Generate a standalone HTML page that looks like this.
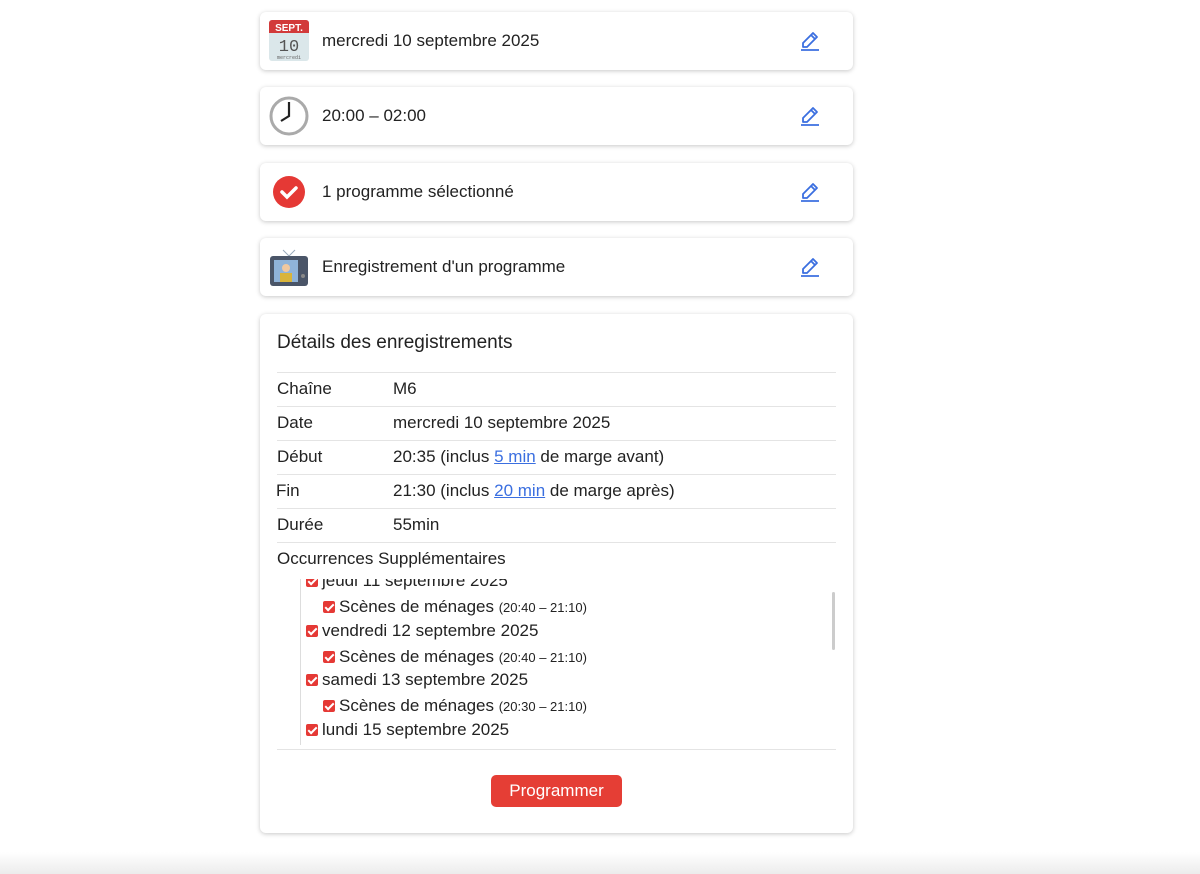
<!DOCTYPE html>
<html><head><meta charset="utf-8"><style>
body{margin:0;width:1200px;height:874px;background:#fff;font-family:"Liberation Sans",sans-serif;color:#222;position:relative;overflow:hidden}
.card{position:absolute;left:260px;width:593px;background:#fff;border-radius:6px;box-shadow:0 1px 5px rgba(0,0,0,.22)}
.row{height:58px}
.row .txt{position:absolute;left:62px;top:19px;font-size:17px}
.row .ic{position:absolute;left:9px;top:8px;width:40px;height:42px}
.pen{position:absolute;left:540px;top:16px}
.det{top:314px;height:519px}
h2{position:absolute;left:17px;top:18px;margin:0;font-size:19px;font-weight:normal}
.tr{position:absolute;left:17px;width:559px;height:34px;border-top:1px solid #e4e4e4;font-size:17px;line-height:32px}
.tr span.l{position:absolute;left:0}
.tr span.v{position:absolute;left:116px}
a{color:#3b6fe0}
.cb{display:inline-block;width:12px;height:12px;background:#e53935;border-radius:2px;vertical-align:-1px;margin-right:4px;position:relative}
.cb:after{content:"";position:absolute;left:4px;top:1px;width:3px;height:7px;border:solid #fff;border-width:0 2px 2px 0;transform:rotate(45deg)}
.occ{position:absolute;left:17px;top:265px;width:559px;height:170px;overflow:hidden;border-bottom:1px solid #e4e4e4}
.occ .in{position:absolute;left:23px;top:0;width:1px;height:166px;background:#ddd}
.occ div.l{position:absolute;font-size:17px;white-space:nowrap}
small{font-size:13px}
.btn{position:absolute;left:231px;top:461px;width:131px;height:32px;background:#e53e35;color:#fff;border-radius:5px;text-align:center;line-height:31px;font-size:17px}
</style></head><body>
<svg width="0" height="0" style="position:absolute"><defs><g id="pen"><path d="M3 15 L3 19 L7 19 L17 9 L13 5 Z M11 7 L15 11" fill="none" stroke="#3b6fe0" stroke-width="1.8" stroke-linejoin="round"/><path d="M1 22 H19" stroke="#3b6fe0" stroke-width="1.8"/></g></defs></svg>

<div class="card row" style="top:12px">
<svg class="ic" viewBox="0 0 40 42"><rect x="0" y="0" width="40" height="41" rx="3" fill="#dbe7ea"/><path d="M0 3a3 3 0 0 1 3-3h34a3 3 0 0 1 3 3v10H0z" fill="#d23a3a"/><text x="20" y="11" font-size="10" fill="#fff" text-anchor="middle" font-family="Liberation Sans" font-weight="bold">SEPT.</text><text x="20" y="31" font-size="17" fill="#555" text-anchor="middle" font-family="Liberation Mono">10</text><text x="20" y="39" font-size="5" fill="#666" text-anchor="middle" font-family="Liberation Mono">mercredi</text></svg>
<div class="txt">mercredi 10 septembre 2025</div><svg class="pen" width="20" height="24"><use href="#pen"/></svg></div>

<div class="card row" style="top:87px">
<svg class="ic" viewBox="0 0 40 42"><circle cx="20" cy="21" r="18" fill="#fff" stroke="#aaa" stroke-width="3"/><path d="M20 7V21L12 26" fill="none" stroke="#222" stroke-width="2.2"/></svg>
<div class="txt">20:00 – 02:00</div><svg class="pen" width="20" height="24"><use href="#pen"/></svg></div>

<div class="card row" style="top:163px">
<svg class="ic" viewBox="0 0 40 42"><circle cx="20" cy="21" r="16" fill="#e53935"/><path d="M13 21l5 5 9-9" fill="none" stroke="#fff" stroke-width="3.5" stroke-linecap="round"/></svg>
<div class="txt">1 programme sélectionné</div><svg class="pen" width="20" height="24"><use href="#pen"/></svg></div>

<div class="card row" style="top:238px">
<svg class="ic" viewBox="0 0 40 42"><path d="M14 4l6 6 6-6" stroke="#9ab" fill="none"/><rect x="1" y="10" width="38" height="30" rx="3" fill="#4a5568"/><rect x="5" y="14" width="24" height="22" fill="#8fb3d9"/><rect x="11" y="27" width="12" height="9" fill="#d9b43a"/><circle cx="17" cy="22" r="4" fill="#f0c8a0"/><circle cx="34" cy="30" r="2" fill="#888"/></svg>
<div class="txt">Enregistrement d'un programme</div><svg class="pen" width="20" height="24"><use href="#pen"/></svg></div>

<div class="card det">
<h2>Détails des enregistrements</h2>
<div class="tr" style="top:58px"><span class="l">Chaîne</span><span class="v">M6</span></div>
<div class="tr" style="top:92px"><span class="l">Date</span><span class="v">mercredi 10 septembre 2025</span></div>
<div class="tr" style="top:126px"><span class="l">Début</span><span class="v">20:35 (inclus <a href="#">5 min</a> de marge avant)</span></div>
<div class="tr" style="top:160px"><span class="l" style="left:-1px">Fin</span><span class="v">21:30 (inclus <a href="#">20 min</a> de marge après)</span></div>
<div class="tr" style="top:194px"><span class="l">Durée</span><span class="v">55min</span></div>
<div class="tr" style="top:228px;border-bottom:none"><span class="l">Occurrences Supplémentaires</span></div>
<div class="occ"><div class="in"></div>
<div style="position:absolute;right:1px;top:13px;width:3px;height:58px;background:#ccc;border-radius:2px"></div>
<div class="l" style="left:29px;top:-8px"><span class="cb"></span>jeudi 11 septembre 2025</div>
<div class="l" style="left:46px;top:18px"><span class="cb"></span>Scènes de ménages <small>(20:40 – 21:10)</small></div>
<div class="l" style="left:29px;top:42px"><span class="cb"></span>vendredi 12 septembre 2025</div>
<div class="l" style="left:46px;top:68px"><span class="cb"></span>Scènes de ménages <small>(20:40 – 21:10)</small></div>
<div class="l" style="left:29px;top:91px"><span class="cb"></span>samedi 13 septembre 2025</div>
<div class="l" style="left:46px;top:117px"><span class="cb"></span>Scènes de ménages <small>(20:30 – 21:10)</small></div>
<div class="l" style="left:29px;top:141px"><span class="cb"></span>lundi 15 septembre 2025</div>
</div>
<div class="btn">Programmer</div>
</div>
<div style="position:absolute;left:0;top:852px;width:1200px;height:22px;background:linear-gradient(#fff,#ececec)"></div>
</body></html>
